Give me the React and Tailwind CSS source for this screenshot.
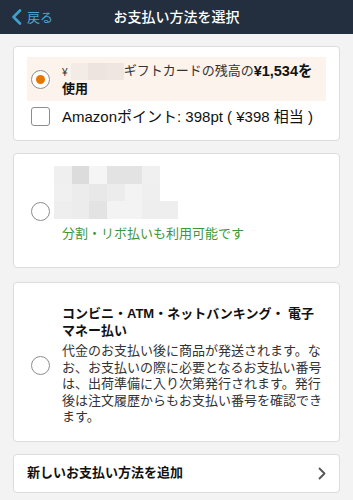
import React from 'react';

// pixelated placeholder blocks (card image + gift card code are masked)
const CARD_BLUR = [
  ['bg-[#efefef]', 'bg-[#dcdcdc]', 'bg-[#f5f5f5]', 'bg-[#e3e3e3]', 'bg-[#e3e3e3]', 'bg-[#f0f0f0]', 'bg-white'],
  ['bg-[#f0f0f0]', 'bg-[#ececec]', 'bg-[#e8e8e8]', 'bg-[#ececec]', 'bg-[#f3f3f3]', 'bg-[#efefef]', 'bg-white'],
  ['bg-[#eeeeee]', 'bg-[#ececec]', 'bg-[#e3e3e3]', 'bg-[#f3f3f3]', 'bg-[#f3f3f3]', 'bg-[#eeeeee]', 'bg-[#eeeeee]'],
];

const GIFT_BLUR = ['bg-[#f3ebe6]', 'bg-[#ede4df]', 'bg-[#efe6e1]'];

function Radio({ checked = false, className = '' }) {
  return (
    <span
      className={`w-[19px] h-[19px] shrink-0 rounded-full border border-[#8d8d8d] bg-white flex items-center justify-center ${className}`}
    >
      {checked && <span className="w-[9px] h-[9px] rounded-full bg-[#e77600]" />}
    </span>
  );
}

function Checkbox() {
  return <span className="w-[19px] h-[19px] shrink-0 rounded-[3px] border border-[#8d8d8d] bg-white" />;
}

export default function App() {
  return (
    <div className="w-[353px] h-[500px] overflow-hidden bg-[#f3f3f3] font-['Liberation_Sans','Noto_Sans_CJK_JP',sans-serif] text-[#111]">
      {/* Header */}
      <header className="h-[34px] bg-[#232f3e] grid grid-cols-[1fr_auto_1fr] items-center">
        <button className="flex items-center gap-[5px] pl-[11px] text-[#4fa3cf]">
          <svg width="11" height="16" viewBox="0 0 11 16" fill="none">
            <polyline points="9,1.5 2.5,8 9,14.5" stroke="#3f9fd3" strokeWidth="2.6" strokeLinecap="round" strokeLinejoin="round" />
          </svg>
          <span className="text-[13px] leading-none">戻る</span>
        </button>
        <h1 className="text-[14px] font-medium text-white leading-none">お支払い方法を選択</h1>
        <span />
      </header>

      <main className="px-[13px] pt-[12px] flex flex-col gap-[12px]">
        {/* Balance / points */}
        <section className="bg-white border border-[#dcdcdc] rounded-[4px] px-[13px] pt-[10px] pb-[9px]">
          <div className="h-[44px] bg-[#fcf3ec] flex items-center pl-[4px]">
            <Radio checked />
            <div className="ml-[12px] text-[13px] leading-[16px] text-[#333]">
              <div className="flex items-center">
                <span className="text-[10px] mr-[3px] mt-[3px]">¥</span>
                <span className="flex h-[17px]">
                  {GIFT_BLUR.map((c, i) => (
                    <span key={i} className={`w-[17.7px] h-full ${c}`} />
                  ))}
                </span>
                <span>ギフトカードの残高の</span>
                <span className="font-bold text-[#111] text-[14.5px]">¥1,534を</span>
              </div>
              <div className="font-bold text-[#111]">使用</div>
            </div>
          </div>
          <div className="h-[30px] flex items-center pl-[4px]">
            <Checkbox />
            <span className="ml-[12px] text-[15px] leading-none">Amazonポイント: 398pt ( ¥398 相当 )</span>
          </div>
        </section>

        {/* Credit card */}
        <section className="bg-white border border-[#dcdcdc] rounded-[4px] pl-[17px] pt-[12px] pb-[25px] flex items-start">
          <Radio className="mt-[36px]" />
          <div className="ml-[4px]">
            <div className="flex flex-col">
              {CARD_BLUR.map((row, r) => (
                <div key={r} className="flex h-[17.7px]">
                  {row.map((c, i) => (
                    <span key={i} className={`w-[17.7px] h-full ${c}`} />
                  ))}
                </div>
              ))}
            </div>
            <p className="ml-[8px] mt-[7px] text-[13px] leading-[16px] text-[#3b973b]">分割・リボ払いも利用可能です</p>
          </div>
        </section>

        {/* Convenience store etc. */}
        <section className="mt-[2px] bg-white border border-[#dcdcdc] rounded-[4px] pl-[17px] pr-[14px] pt-[22px] pb-[15px] flex items-center">
          <Radio />
          <div className="ml-[12px] text-[13px]">
            <p className="font-bold leading-[17px]">
              コンビニ・ATM・ネットバンキング・ 電子<br />
              マネー払い
            </p>
            <p className="mt-[4px] leading-[16.5px] text-[#333]">
              代金のお支払い後に商品が発送されます。な<br />
              お、お支払いの際に必要となるお支払い番号<br />
              は、出荷準備に入り次第発行されます。発行<br />
              後は注文履歴からもお支払い番号を確認でき<br />
              ます。
            </p>
          </div>
        </section>

        {/* Add new */}
        <button className="h-[39px] bg-white border border-[#dcdcdc] rounded-[4px] px-[13px] flex items-center justify-between">
          <span className="text-[13px] font-bold">新しいお支払い方法を追加</span>
          <svg width="8" height="13" viewBox="0 0 8 13" fill="none">
            <polyline points="1.5,1.5 6.5,6.5 1.5,11.5" stroke="#555" strokeWidth="1.8" strokeLinecap="round" strokeLinejoin="round" />
          </svg>
        </button>
      </main>
    </div>
  );
}
